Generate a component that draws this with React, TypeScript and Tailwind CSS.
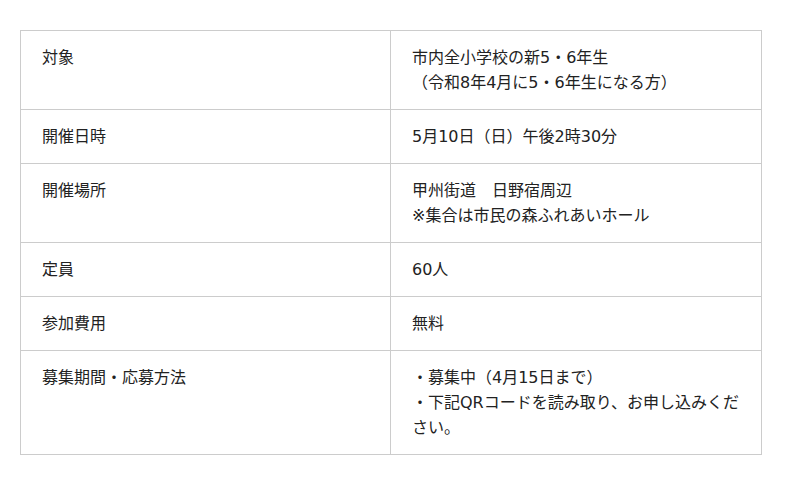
const rows: { label: string; lines: string[] }[] = [
  { label: '対象', lines: ['市内全小学校の新5・6年生', '（令和8年4月に5・6年生になる方）'] },
  { label: '開催日時', lines: ['5月10日（日）午後2時30分'] },
  { label: '開催場所', lines: ['甲州街道　日野宿周辺', '※集合は市民の森ふれあいホール'] },
  { label: '定員', lines: ['60人'] },
  { label: '参加費用', lines: ['無料'] },
  { label: '募集期間・応募方法', lines: ['・募集中（4月15日まで）', '・下記QRコードを読み取り、お申し込みください。'] },
];

export default function App() {
  return (
    <div className="min-h-[485px] bg-white pt-[30px] pl-[20px] font-['DejaVu_Sans','Noto_Sans_CJK_JP',sans-serif] text-[16px] leading-[25px] text-[#222]">
      <table className="w-[742px] table-fixed border-collapse">
        <tbody>
          {rows.map((row) => (
            <tr key={row.label}>
              <td className="w-[370px] border border-[#ccc] px-[21px] py-[14px] align-top">{row.label}</td>
              <td className="border border-[#ccc] px-[21px] py-[14px] align-top">
                {row.lines.map((line) => (
                  <div key={line}>{line}</div>
                ))}
              </td>
            </tr>
          ))}
        </tbody>
      </table>
    </div>
  );
}
